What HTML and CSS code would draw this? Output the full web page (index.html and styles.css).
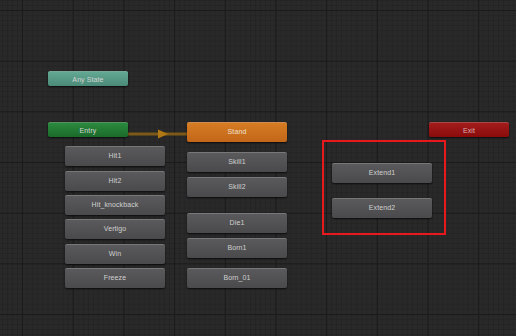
FILE: index.html
```html
<!DOCTYPE html>
<html>
<head>
    <meta charset="UTF-8">
    <title>Animator</title>
    <link rel="stylesheet" href="styles.css">
</head>
<body>
    <div class="graph">
        <svg class="link" width="60" height="12" viewBox="0 0 60 12">
            <line x1="0" y1="6" x2="60" y2="6" stroke="#7d5a18" stroke-width="3"/>
            <polygon points="30,1.5 40,6 30,10.5" fill="#b07814"/>
        </svg>

        <div class="node any-state" style="left:48px; top:71px;">Any State</div>
        <div class="node entry" style="left:48px; top:122px;">Entry</div>
        <div class="node exit" style="left:429px; top:122px;">Exit</div>
        <div class="node stand tall" style="left:187px; top:122px;">Stand</div>

        <div class="node state tall" style="left:65px; top:146px;">Hit1</div>
        <div class="node state tall" style="left:65px; top:171px;">Hit2</div>
        <div class="node state tall" style="left:65px; top:195px;">Hit_knockback</div>
        <div class="node state tall" style="left:65px; top:219px;">Vertigo</div>
        <div class="node state tall" style="left:65px; top:244px;">Win</div>
        <div class="node state tall" style="left:65px; top:268px;">Freeze</div>

        <div class="node state tall" style="left:187px; top:152px;">Skill1</div>
        <div class="node state tall" style="left:187px; top:177px;">Skill2</div>
        <div class="node state tall" style="left:187px; top:213px;">Die1</div>
        <div class="node state tall" style="left:187px; top:238px;">Born1</div>
        <div class="node state tall" style="left:187px; top:268px;">Born_01</div>

        <div class="highlight"></div>
        <div class="node state tall" style="left:332px; top:163px;">Extend1</div>
        <div class="node state tall" style="left:332px; top:198px;">Extend2</div>
    </div>
</body>
</html>
```

FILE: styles.css
```css
body {
    margin: 0;
    background: #282828;
    font-family: "Liberation Sans", Arial, sans-serif;
}
.graph {
    position: relative;
    width: 516px;
    height: 336px;
    overflow: hidden;
    background-color: #292929;
    background-image:
        linear-gradient(to right, #1a1a1a 1px, transparent 1px),
        linear-gradient(to bottom, #1a1a1a 1px, transparent 1px),
        linear-gradient(to right, rgba(0,0,0,0.1) 1px, transparent 1px),
        linear-gradient(to bottom, rgba(0,0,0,0.1) 1px, transparent 1px);
    background-size: 50.7px 100%, 100% 50.7px, 5.07px 100%, 100% 5.07px;
    background-position: 22px 0, 0 10px, 2px 0, 0 0;
}
.node {
    position: absolute;
    width: 80px;
    height: 15px;
    box-sizing: border-box;
    display: flex;
    align-items: center;
    justify-content: center;
    font-size: 7px;
    letter-spacing: 0.1px;
    color: #d4d4d4;
    border-top: 1px solid rgba(255,255,255,0.25);
    border-radius: 2px;
    box-shadow: 0 1px 2px rgba(0,0,0,0.7);
}
.node.tall {
    width: 100px;
    height: 20px;
    padding-bottom: 3px;
}
.any-state {
    background: linear-gradient(#62a893, #4b8a78);
}
.entry {
    background: linear-gradient(#2b8a3e, #1b6a2a);
}
.exit {
    background: linear-gradient(#a31c1c, #8a0b0b);
    color: #d8b0b0;
}
.stand {
    background: linear-gradient(#d67c22, #c2661a);
    color: #f0e0d0;
}
.state {
    background: linear-gradient(#5a5a5c, #4a4a4c);
    color: #d0d0d0;
}
.link {
    position: absolute;
    left: 128px;
    top: 128px;
}
.highlight {
    position: absolute;
    left: 322px;
    top: 140px;
    width: 124px;
    height: 95px;
    box-sizing: border-box;
    border: 2px solid #e8181c;
}
```
